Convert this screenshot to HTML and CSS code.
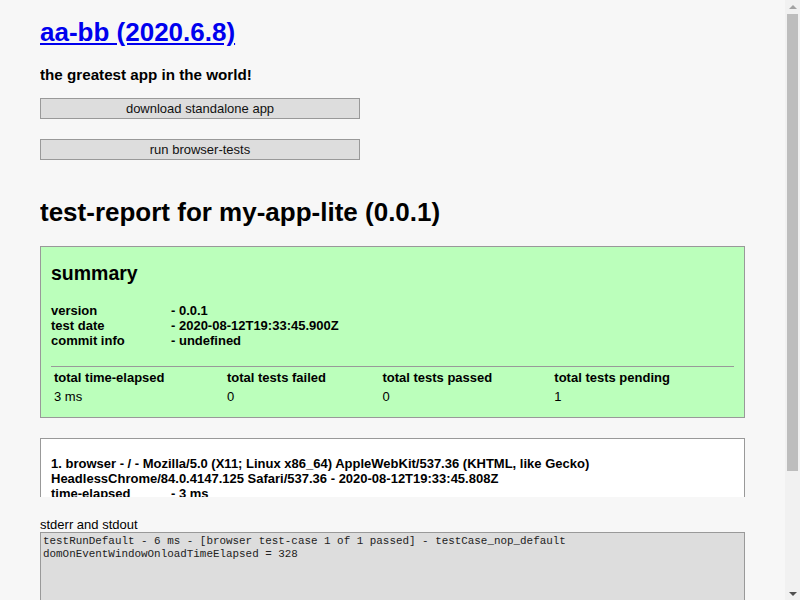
FILE: index.html
```html
<!DOCTYPE html>
<html>
<head>
<meta charset="utf-8">
<title>test-report for my-app-lite (0.0.1)</title>
<link rel="stylesheet" href="styles.css">
</head>
<body>
<div class="page">
  <h1 class="title"><a href="#">aa-bb (2020.6.8)</a></h1>
  <h3 class="tagline">the greatest app in the world!</h3>
  <div class="actions">
    <button class="btn">download standalone app</button>
    <button class="btn">run browser-tests</button>
  </div>

  <h1 class="report-title">test-report for my-app-lite (0.0.1)</h1>

  <div class="box box-summary">
    <h2 class="summary-title">summary</h2>
    <div class="kv">
      <span>version</span><span>- 0.0.1</span>
      <span>test date</span><span>- 2020-08-12T19:33:45.900Z</span>
      <span>commit info</span><span>- undefined</span>
    </div>
    <table class="totals">
      <thead>
        <tr><th>total time-elapsed</th><th>total tests failed</th><th>total tests passed</th><th>total tests pending</th></tr>
      </thead>
      <tbody>
        <tr><td>3 ms</td><td>0</td><td>0</td><td>1</td></tr>
      </tbody>
    </table>
  </div>

  <div class="box box-platform">
    <div class="platform-title">1. browser - / - Mozilla/5.0 (X11; Linux x86_64) AppleWebKit/537.36 (KHTML, like Gecko) HeadlessChrome/84.0.4147.125 Safari/537.36 - 2020-08-12T19:33:45.808Z</div>
    <div class="kv">
      <span>time-elapsed</span><span>- 3 ms</span>
      <span>tests failed</span><span>- 0</span>
      <span>tests passed</span><span>- 0</span>
      <span>tests pending</span><span>- 1</span>
    </div>
    <table class="totals cases">
      <thead>
        <tr><th>#</th><th>time-elapsed</th><th>status</th><th>test-case</th></tr>
      </thead>
      <tbody>
        <tr><td>1</td><td>3 ms</td><td>pending</td><td>testCase_nop_default</td></tr>
      </tbody>
    </table>
  </div>

  <div class="footer">[ this document was created with <a href="#">utility2</a> ]</div>
</div>

<div class="console">
  <div class="console-label">stderr and stdout</div>
  <textarea class="console-output" readonly>testRunDefault - 6 ms - [browser test-case 1 of 1 passed] - testCase_nop_default
domOnEventWindowOnloadTimeElapsed = 328</textarea>
</div>

<div class="scrollbar" aria-hidden="true">
  <div class="sb-arrow sb-up"></div>
  <div class="sb-track"><div class="sb-thumb"></div></div>
  <div class="sb-arrow sb-down"></div>
</div>
</body>
</html>
```

FILE: styles.css
```css
html {
  background: #f7f7f7;
}
body {
  margin: 0 55px 0 40px;
  font-family: "Liberation Sans", Arial, sans-serif;
  font-size: 13px;
  color: #000;
  background: #f7f7f7;
}
.page {
  padding-bottom: 103px;
}
.title {
  font-size: 26px;
  margin: 17.4px 0;
}
.title a {
  color: #0000ee;
}
.tagline {
  font-size: 15.2px;
  margin: 16px 0 15.2px;
}
.actions {
  display: flex;
  flex-direction: column;
  gap: 20px;
}
.btn {
  display: block;
  width: 320px;
  height: 21px;
  margin: 0;
  padding: 0;
  font-family: "Liberation Sans", Arial, sans-serif;
  font-size: 13px;
  color: #111;
  background: #ddd;
  border: 1px solid #999;
}
.report-title {
  font-size: 26px;
  margin: 37px 0 18px;
}
.box {
  border: 1px solid #999;
  padding: 0 10px 10px;
  margin-bottom: 20px;
}
.box-summary {
  background: #bfb;
}
.box-platform {
  background: #fff;
  padding-top: 17px;
}
.summary-title {
  font-size: 19.5px;
  margin: 15px 0 18px;
}
.kv {
  display: grid;
  grid-template-columns: 120px 1fr;
  font-weight: bold;
  line-height: 15px;
}
.platform-title {
  font-weight: bold;
  line-height: 15px;
}
.totals {
  width: 100%;
  margin-top: 18px;
  border-top: 1px solid #999;
  line-height: 15px;
  font-size: 13px;
}
.totals th {
  text-align: left;
  padding: 1px;
}
.totals td {
  padding: 1px;
}
.cases {
  margin-top: 15px;
}
.footer {
  text-align: center;
  line-height: 15px;
}
.footer a {
  color: #0000ee;
}
.console {
  position: fixed;
  left: 0;
  right: 15px;
  bottom: 0;
  height: 103px;
  padding: 20px 40px 0;
  box-sizing: border-box;
  background: #f7f7f7;
}
.console-label {
  line-height: 15px;
}
.console-output {
  display: block;
  box-sizing: border-box;
  width: 100%;
  height: 120px;
  margin: 0;
  padding: 2px;
  resize: none;
  font-family: "Liberation Mono", "Courier New", monospace;
  font-size: 10.9px;
  line-height: 12.5px;
  color: #222;
  background: #ddd;
  border: 1px solid #999;
}
.scrollbar {
  position: fixed;
  top: 0;
  right: 0;
  bottom: 0;
  width: 15px;
  background: #f1f1f1;
  display: flex;
  flex-direction: column;
}
.sb-arrow {
  height: 14px;
  flex: none;
  display: flex;
  align-items: center;
  justify-content: center;
}
.sb-up::before {
  content: "";
  border-left: 4px solid transparent;
  border-right: 4px solid transparent;
  border-bottom: 4px solid #a3a3a3;
  margin-top: -1px;
}
.sb-down::before {
  content: "";
  border-left: 4px solid transparent;
  border-right: 4px solid transparent;
  border-top: 4px solid #505050;
  margin-top: 2px;
}
.sb-track {
  flex: 1;
  padding: 0 2px;
}
.sb-thumb {
  height: 457px;
  background: #bdbdbd;
}
```
